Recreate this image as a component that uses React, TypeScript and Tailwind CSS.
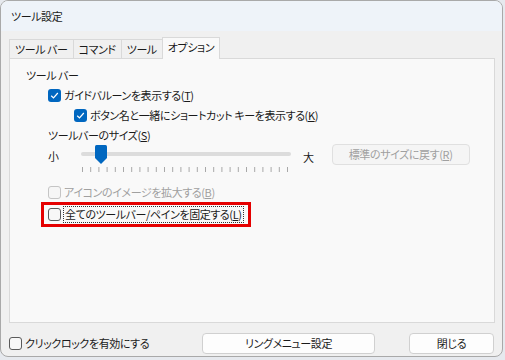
import React from 'react';

const font = "[font-family:'Noto_Sans_CJK_JP','Noto_Sans',sans-serif] [font-feature-settings:'palt'] tracking-[-0.4px]";

const CheckBox: React.FC<{ checked?: boolean; disabled?: boolean }> = ({ checked, disabled }) => {
  if (checked) {
    return (
      <span className="w-[13px] h-[13px] rounded-[3px] bg-[#0067c0] flex items-center justify-center shrink-0">
        <svg width="9" height="9" viewBox="0 0 9 9">
          <path d="M1.2 4.8 L3.5 7 L7.8 2" stroke="white" strokeWidth="1.2" fill="none" />
        </svg>
      </span>
    );
  }
  return (
    <span
      className={`w-[13px] h-[13px] rounded-[3px] border shrink-0 ${
        disabled ? 'border-[#c5c5c5] bg-[#f6f6f6]' : 'border-[#5a5a5a] bg-[#f7f7f7]'
      }`}
    />
  );
};

const Tab: React.FC<{ label: string; active?: boolean }> = ({ label, active }) => (
  <div
    className={`px-[5px] border border-b-0 border-[#d9d9d9] -ml-px first:ml-0 flex items-center ${
      active ? 'h-[22px] bg-[#f9f9f9] relative z-10 -mb-px pb-[2px]' : 'h-[19px] bg-[#f0f0f0]'
    }`}
  >
    {label}
  </div>
);

const Ticks = () => (
  <svg width="212" height="6" className="block">
    {Array.from({ length: 26 }).map((_, i) => (
      <line key={i} x1={1.5 + i * 8.2} y1="0" x2={1.5 + i * 8.2} y2="5" stroke="#a8a8a8" strokeWidth="1" />
    ))}
  </svg>
);

export default function App() {
  return (
    <div className={`w-[505px] h-[360px] bg-[#e6e9ee] text-[11px] text-[#1a1a1a] ${font}`}>
      <div className="w-[503px] h-[357px] rounded-[8px] border border-[#a9a9a9] bg-[#f0f0f0] overflow-hidden flex flex-col">
        {/* title bar */}
        <div className="h-[30px] bg-[#eef3f9] flex items-center pl-[10px] shrink-0">ツール設定</div>

        {/* tabs */}
        <div className="flex items-end pl-[8px] mt-[5px] h-[22px]">
          <Tab label="ツール バー" />
          <Tab label="コマンド" />
          <Tab label="ツール" />
          <Tab label="オプション" active />
        </div>

        {/* panel */}
        <div className="mx-[8px] w-[486px] h-[265px] bg-[#f9f9f9] border border-[#d9d9d9] flex flex-col pl-[16px] pt-[6px] whitespace-nowrap">
          <div className="h-[20px] flex items-center">ツール バー</div>
          <div className="h-[20px] flex items-center gap-[3px] pl-[22px]">
            <CheckBox checked />
            <span>ガイドバルーンを表示する(<u>T</u>)</span>
          </div>
          <div className="h-[20px] flex items-center gap-[3px] pl-[48px]">
            <CheckBox checked />
            <span>ボタン名と一緒にショートカット キーを表示する(<u>K</u>)</span>
          </div>
          <div className="h-[20px] flex items-center pl-[22px]">ツールバーのサイズ(<u>S</u>)</div>

          {/* slider row */}
          <div className="flex items-start pl-[22px] h-[30px]">
            <span className="w-[33px] pt-[3px]">小</span>
            <div className="flex flex-col w-[210px] relative pt-[7px]">
              <div className="h-[4px] w-[210px] bg-[#dcdcdc] rounded-full" />
              <svg width="12" height="19" className="absolute left-[14px] top-0" viewBox="0 0 12 19">
                <path d="M1.5 0 H10.5 Q12 0 12 1.5 V13 L6 19 L0 13 V1.5 Q0 0 1.5 0 Z" fill="#0067c0" />
              </svg>
              <div className="mt-[11px]">
                <Ticks />
              </div>
            </div>
            <span className="ml-[12px] pt-[4px]">大</span>
            <div className="ml-[18px] mt-[-1px] w-[138px] h-[21px] rounded-[4px] border border-[#e0e0e0] bg-[#f5f5f5] text-[#a0a0a0] flex items-center justify-center">
              標準のサイズに戻す(<u>R</u>)
            </div>
          </div>

          <div className="h-[20px] flex items-center gap-[3px] pl-[22px] mt-[7px] text-[#a0a0a0]">
            <CheckBox disabled />
            <span>アイコンのイメージを拡大する(<u>B</u>)</span>
          </div>

          <div className="ml-[15px] mt-[0px] w-[210px] h-[25px] border-[3px] border-[#e50000] flex items-center gap-[2px] pl-[4px]">
            <CheckBox />
            <span className="border border-dotted border-[#333] px-px leading-[15px]">
              全てのツールバー/ペインを固定する(<u>L</u>)
            </span>
          </div>
        </div>

        {/* bottom row */}
        <div className="flex items-center mt-[10px] pl-[8px] pr-[8px] h-[21px]">
          <CheckBox />
          <span className="ml-[3px]">クリックロックを有効にする</span>
          <div className="ml-auto w-[173px] h-[21px] rounded-[4px] border border-[#d0d0d0] bg-[#fdfdfd] flex items-center justify-center">
            リングメニュー設定
          </div>
          <div className="ml-[34px] w-[85px] h-[21px] rounded-[4px] border border-[#d0d0d0] bg-[#fdfdfd] flex items-center justify-center">
            閉じる
          </div>
        </div>
      </div>
    </div>
  );
}
